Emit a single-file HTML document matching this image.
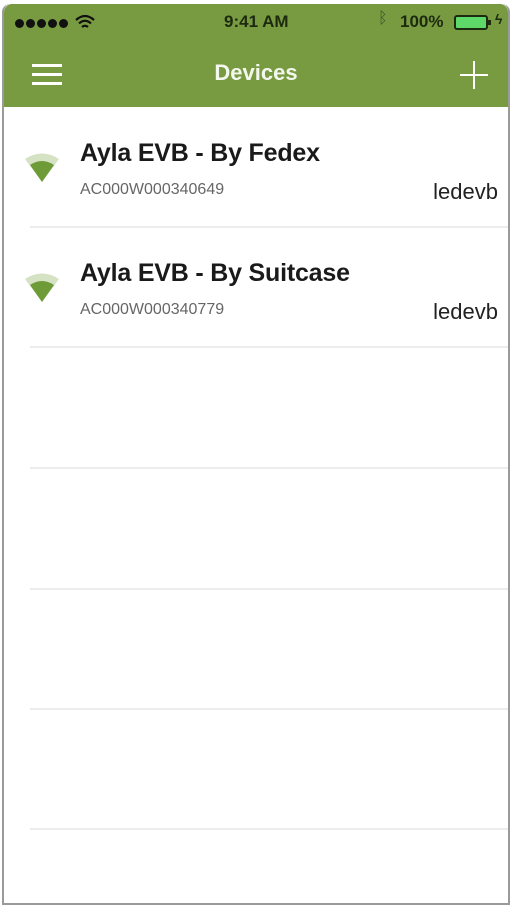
<!DOCTYPE html>
<html><head><meta charset="utf-8"><style>
*{margin:0;padding:0;box-sizing:border-box}
body{width:512px;height:906px;background:#fff;font-family:"Liberation Sans",sans-serif;position:relative;overflow:hidden}
.frame{position:absolute;left:2px;top:4px;width:508px;height:901px;border:2px solid #9a9a9a;border-top:none;border-radius:8px 8px 0 0;background:#fff;overflow:hidden}
.hdr{position:absolute;left:0;top:0;width:100%;height:103px;background:#789b41;border-radius:8px 8px 0 0}
.t{position:absolute;color:#222}
.sep{position:absolute;left:26px;right:0;height:2px;background:#ececec}
.name{position:absolute;left:76px;font-size:25px;font-weight:bold;color:#1a1a1a;letter-spacing:-0.2px}
.id{position:absolute;left:76px;font-size:16px;color:#666}
.own{position:absolute;right:10px;font-size:22px;color:#222}
.dot{position:absolute;top:15px;width:9px;height:9px;border-radius:50%;background:#111}
</style></head><body>
<div class="frame">
<div class="hdr">
 <div class="dot" style="left:11px"></div><div class="dot" style="left:22px"></div><div class="dot" style="left:33px"></div><div class="dot" style="left:44px"></div><div class="dot" style="left:55px"></div>
 <svg style="position:absolute;left:71px;top:10px" width="20" height="16" viewBox="0 0 20 16"><path d="M1 6 Q10 -2 19 6 M4 9.5 Q10 4 16 9.5 M7 13 Q10 10.5 13 13" stroke="#111" stroke-width="2.2" fill="none"/></svg>
 <div class="t" style="left:220px;top:8px;font-size:17px;font-weight:bold;color:#1d2a10">9:41 AM</div>
 <div class="t" style="left:374px;top:6px;font-size:16px;color:#3d5226">ᛒ</div>
 <div class="t" style="left:396px;top:8px;font-size:17px;font-weight:bold;color:#1d2a10">100%</div>
 <div style="position:absolute;left:450px;top:11px;width:34px;height:15px;border:2px solid #1d2a10;border-radius:3px;background:#5fd86a"></div>
 <div style="position:absolute;left:484px;top:16px;width:3px;height:5px;background:#1d2a10"></div>
 <div class="t" style="left:491px;top:7px;font-size:14px;font-weight:bold;color:#1d2a10">ϟ</div>
 <div style="position:absolute;left:28px;top:60px;width:30px;height:3px;background:#fff;box-shadow:0 9px 0 #fff,0 18px 0 #fff"></div>
 <div class="t" style="left:0;width:100%;text-align:center;top:56px;font-size:22px;font-weight:bold;color:#f4f7ee">Devices</div>
 <div style="position:absolute;left:456px;top:70px;width:28px;height:2px;background:#fff"></div>
 <div style="position:absolute;left:469px;top:57px;width:2px;height:28px;background:#fff"></div>
</div>
<svg style="position:absolute;left:20px;top:146px" width="36" height="34" viewBox="0 0 36 34"><path d="M1 9 Q18 -2 35 9 L18 32Z" fill="#d5e2c4"/><path d="M6 15 Q18 7 30 15 L18 32Z" fill="#6f9a38"/></svg>
<div class="name" style="top:135px">Ayla EVB - By Fedex</div>
<div class="id" style="top:177px">AC000W000340649</div>
<div class="own" style="top:175px">ledevb</div>
<div class="sep" style="top:222px"></div>
<svg style="position:absolute;left:20px;top:266px" width="36" height="34" viewBox="0 0 36 34"><path d="M1 9 Q18 -2 35 9 L18 32Z" fill="#d5e2c4"/><path d="M6 15 Q18 7 30 15 L18 32Z" fill="#6f9a38"/></svg>
<div class="name" style="top:255px">Ayla EVB - By Suitcase</div>
<div class="id" style="top:297px">AC000W000340779</div>
<div class="own" style="top:295px">ledevb</div>
<div class="sep" style="top:342px"></div>
<div class="sep" style="top:463px"></div>
<div class="sep" style="top:584px"></div>
<div class="sep" style="top:704px"></div>
<div class="sep" style="top:824px"></div>
</div>
</body></html>
